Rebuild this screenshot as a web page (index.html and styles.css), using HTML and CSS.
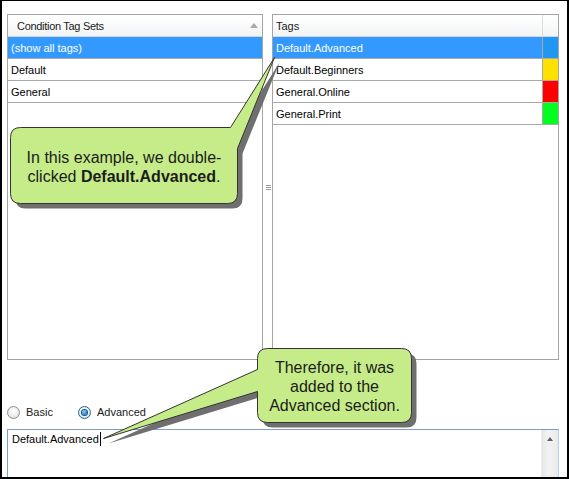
FILE: index.html
```html
<!DOCTYPE html>
<html>
<head>
<meta charset="utf-8">
<title>Condition Tags</title>
<link rel="stylesheet" href="styles.css">
</head>
<body>
<div class="frame">
  <div class="panels">
    <div class="panel panel-left">
      <div class="hdr">
        <span class="hdr-label">Condition Tag Sets</span>
        <span class="sort"></span>
      </div>
      <div class="row sel"><span class="cell name">(show all tags)</span></div>
      <div class="row"><span class="cell name">Default</span></div>
      <div class="row"><span class="cell name">General</span></div>
    </div>
    <div class="splitter"><span class="grip"></span></div>
    <div class="panel panel-right">
      <div class="hdr">
        <span class="cell name hdr-label tags">Tags</span>
        <span class="cell swatch"></span>
      </div>
      <div class="row sel"><span class="cell name">Default.Advanced</span><span class="cell swatch sw-blue"></span></div>
      <div class="row"><span class="cell name">Default.Beginners</span><span class="cell swatch sw-yellow"></span></div>
      <div class="row"><span class="cell name">General.Online</span><span class="cell swatch sw-red"></span></div>
      <div class="row"><span class="cell name">General.Print</span><span class="cell swatch sw-green"></span></div>
    </div>
  </div>

  <div class="modes">
    <label class="opt opt-basic"><span class="radio"></span><span>Basic</span></label>
    <label class="opt"><span class="radio on"></span><span>Advanced</span></label>
  </div>

  <div class="editor">
    <div class="editor-text">Default.Advanced<span class="caret"></span></div>
    <div class="vscroll"><span class="up"></span></div>
  </div>

  <svg class="overlay" width="569" height="479" viewBox="0 0 569 479" xmlns="http://www.w3.org/2000/svg">
    <g class="shadow" transform="translate(5.5,5.5)">
      <path d="M20,127 H230 L274,57 L237,148 V193 Q237,203 227,203 H20 Q10,203 10,193 V137 Q10,127 20,127 Z"/>
      <path d="M267,348 H401 Q411,348 411,358 V412 Q411,422 401,422 H267 Q257,422 257,412 V391 L103,438 L257,369 V358 Q257,348 267,348 Z"/>
    </g>
    <g class="bubble" transform="translate(0.5,0.5)">
      <path d="M20,127 H230 L274,57 L237,148 V193 Q237,203 227,203 H20 Q10,203 10,193 V137 Q10,127 20,127 Z"/>
      <path d="M267,348 H401 Q411,348 411,358 V412 Q411,422 401,422 H267 Q257,422 257,412 V391 L103,438 L257,369 V358 Q257,348 267,348 Z"/>
    </g>
  </svg>

  <div class="note note1">In this example, we double-<br>clicked <b>Default.Advanced</b>.</div>
  <div class="note note2">Therefore, it was<br>added to the<br>Advanced section.</div>
</div>
</body>
</html>
```

FILE: styles.css
```css
* { box-sizing: border-box; }

html, body {
  margin: 0;
  padding: 0;
  background: #fff;
}

body {
  font-family: "Liberation Sans", Arial, sans-serif;
  font-size: 11px;
  color: #000;
}

.frame {
  position: relative;
  width: 569px;
  height: 479px;
  overflow: hidden;
  padding: 14px 10px 0 7px;
  background: #fff;
}

.frame::after {
  content: "";
  position: absolute;
  inset: 0;
  border-style: solid;
  border-color: #000;
  border-width: 1px 2px 2px 2px;
  z-index: 10;
  pointer-events: none;
}

/* ---------- panels ---------- */
.panels {
  display: flex;
  height: 346px;
}

.panel {
  border: 1px solid #a5a5a5;
  background: #fff;
  display: flex;
  flex-direction: column;
}

.panel-left { width: 256px; }
.panel-right { flex: 1; }

.splitter {
  width: 9px;
  display: flex;
  align-items: center;
  justify-content: center;
}

.grip {
  width: 5px;
  height: 5px;
  margin-left: 1px;
  background: linear-gradient(#9a9a9a 0 1px, transparent 1px 2px, #9a9a9a 2px 3px, transparent 3px 4px, #9a9a9a 4px 5px);
}

.hdr {
  height: 22px;
  flex: none;
  display: flex;
  align-items: stretch;
  border-bottom: 1px solid #d5d5d5;
  background: linear-gradient(#ffffff, #f3f4f6);
}

.hdr-label {
  display: flex;
  align-items: center;
  flex: 1;
  padding-left: 9px;
  letter-spacing: -0.3px;
  color: #1a1a1a;
}

.hdr-label.tags { padding-left: 8px; letter-spacing: 0; }

.sort {
  align-self: center;
  width: 0;
  height: 0;
  margin-right: 4px;
  margin-top: -1px;
  border-left: 4.5px solid transparent;
  border-right: 4.5px solid transparent;
  border-bottom: 5px solid #a9a9a9;
}

.row {
  height: 22px;
  flex: none;
  display: flex;
  border-bottom: 1px solid #a9a9a9;
}

.cell {
  display: flex;
  align-items: center;
}

.cell.name {
  flex: 1;
  padding-left: 3px;
}

.row.sel .name {
  background: #3399ff;
  color: #fff;
}

.swatch {
  width: 16px;
  border-left: 1px solid #a9a9a9;
}

.hdr .swatch { border-left-color: #dcdcdc; }

.sw-blue { background: #2196f3; }
.sw-yellow { background: #ffe100; }
.sw-red { background: #ff0000; }
.sw-green { background: #00ff1e; }

/* ---------- mode radios ---------- */
.modes {
  height: 69px;
  display: flex;
  align-items: flex-end;
  padding-bottom: 10px;
}

.opt {
  display: flex;
  align-items: center;
  gap: 6px;
  height: 13px;
  line-height: 13px;
  color: #1a1a1a;
}

.opt-basic { width: 71px; }

.radio {
  width: 13px;
  height: 13px;
  border-radius: 50%;
  border: 1px solid #8e8f8f;
  background: radial-gradient(circle at 50% 40%, #ffffff 0, #f1f1f1 45%, #d2d2d2 100%);
  display: flex;
  align-items: center;
  justify-content: center;
}

.radio.on {
  border-color: #2c628b;
  background: radial-gradient(circle at 50% 45%, #ffffff 0, #e8f2fb 50%, #bcd6ee 100%);
}

.radio.on::after {
  content: "";
  width: 5px;
  height: 5px;
  border-radius: 50%;
  background: radial-gradient(circle at 40% 35%, #8fd6ff 0, #2a8bd6 55%, #0f4f8f 100%);
  box-shadow: 0 0 0 1px #1d4f7a;
}

/* ---------- editor ---------- */
.editor {
  height: 60px;
  display: flex;
  border: 1px solid #7f9dc4;
  border-right-color: #b9cde5;
  background: #fff;
}

.editor-text {
  flex: 1;
  padding: 2px 4px;
  line-height: 15px;
  color: #000;
}

.caret {
  display: inline-block;
  width: 1px;
  height: 14px;
  background: #000;
  vertical-align: -3px;
  margin-left: 1px;
}

.vscroll {
  width: 17px;
  display: flex;
  justify-content: center;
  align-items: flex-start;
  background: linear-gradient(90deg, #e6e6e6, #f3f3f3 40%, #ebebeb);
  border-left: 1px solid #ececec;
}

.up {
  width: 0;
  height: 0;
  margin-top: 7px;
  border-left: 3.5px solid transparent;
  border-right: 3.5px solid transparent;
  border-bottom: 4px solid #606060;
}

/* ---------- callouts ---------- */
.overlay {
  position: absolute;
  left: 0;
  top: 0;
  z-index: 3;
  pointer-events: none;
}

.shadow path { fill: #6f6f6f; }

.bubble path {
  fill: #c5ec88;
  stroke: #333333;
  stroke-width: 1;
}

.note {
  position: absolute;
  z-index: 4;
  font-family: "Liberation Sans", Arial, sans-serif;
  font-size: 16px;
  line-height: 19px;
  text-align: center;
  color: #1c1c1c;
}

.note b { font-weight: bold; }

.note1 {
  left: 10px;
  top: 148px;
  width: 228px;
}

.note2 {
  left: 257px;
  top: 358px;
  width: 155px;
}
```
